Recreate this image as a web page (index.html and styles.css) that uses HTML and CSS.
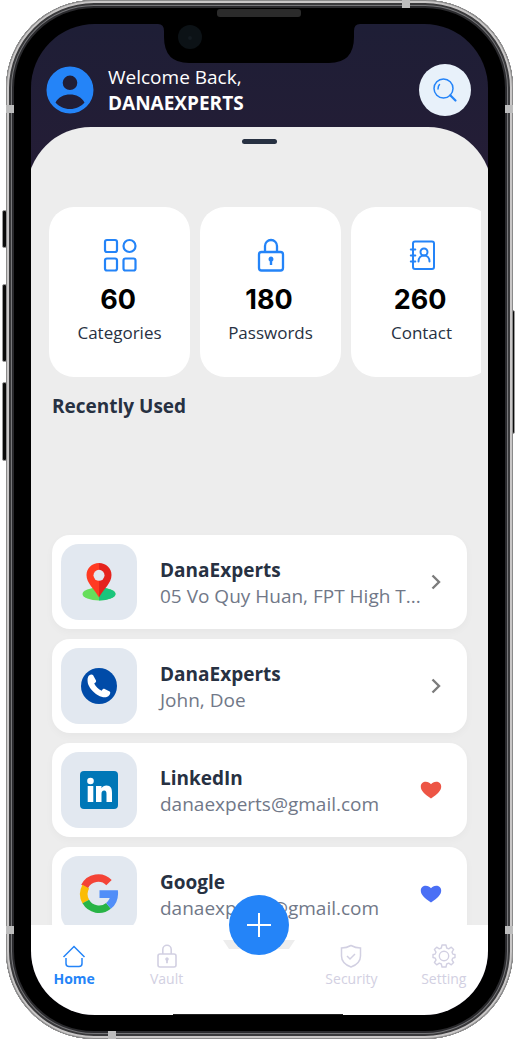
FILE: index.html
```html
<!DOCTYPE html>
<html lang="en">
<head>
<meta charset="utf-8">
<meta name="viewport" content="width=device-width, initial-scale=1">
<title>Password Vault</title>
<link rel="stylesheet" href="styles.css">
</head>
<body>
<div class="phone">
  <span class="side-key key-mute"></span>
  <span class="side-key key-up"></span>
  <span class="side-key key-down"></span>
  <span class="side-key key-power"></span>
  <div class="frame">
    <span class="band band-left-top"></span>
    <span class="band band-left-bottom"></span>
    <span class="band band-right-top"></span>
    <span class="band band-right-bottom"></span>
    <span class="band band-top"></span>
    <span class="band band-bottom"></span>
    <div class="screen">
      <header class="header">
        <svg class="avatar" viewBox="0 0 48 48" aria-hidden="true">
          <path fill="#2484f8" fill-rule="evenodd" d="M24 .5a23.500 23.500 0 1 0 0 47a23.500 23.500 0 0 0 0-47zM24 9.500a7.300 7.300 0 1 1 0 14.600a7.300 7.300 0 0 1 0-14.600zM9.500 36.500C12.500 31 18 28.500 24 28.500s11.500 2.500 14.500 8C35 40.500 30 43 24 43s-11-2.500-14.500-6.500z"/>
        </svg>
        <div class="greeting">
          <p class="welcome">Welcome Back,</p>
          <h1 class="user">DANAEXPERTS</h1>
        </div>
        <button class="search" type="button" aria-label="Search">
          <svg viewBox="0 0 26 26" width="26" height="26" fill="none" stroke="#2484f8" stroke-width="1.500" stroke-linecap="round">
            <circle cx="11.500" cy="11.500" r="9.500"/>
            <path d="M6 12c0-2 .5-3.500 1.500-4.500M18 18l1.500 1.500"/>
            <path stroke-width="2.200" d="M19 19l4.500 4.500"/>
          </svg>
        </button>
      </header>

      <main class="sheet">
        <span class="handle"></span>
        <div class="stats">
          <section class="stat">
            <svg class="stat-icon" viewBox="0 0 36 36" fill="none" stroke="#2484f8" stroke-width="2.200">
              <rect x="3" y="3" width="12" height="12" rx="2"/>
              <circle cx="27.500" cy="9" r="6"/>
              <rect x="3" y="21.500" width="12" height="12" rx="2"/>
              <rect x="21.500" y="21.500" width="12" height="12" rx="2"/>
            </svg>
            <strong class="stat-value">60</strong>
            <span class="stat-label">Categories</span>
          </section>
          <section class="stat">
            <svg class="stat-icon" viewBox="0 0 36 36" fill="none" stroke="#2484f8" stroke-width="2.300">
              <rect x="6" y="15" width="24" height="18.500" rx="2.500"/>
              <path d="M12 15V9a6 6 0 0 1 12 0v6"/>
              <path fill="#2484f8" stroke="none" d="M18 19.500a2.700 2.700 0 0 1 1.200 5V28h-2.400v-3.500a2.700 2.700 0 0 1 1.200-5z"/>
            </svg>
            <strong class="stat-value">180</strong>
            <span class="stat-label">Passwords</span>
          </section>
          <section class="stat">
            <svg class="stat-icon" viewBox="0 0 36 36" fill="none" stroke="#2484f8" stroke-width="2" stroke-linecap="round">
              <rect x="9" y="4.500" width="21" height="27.500" rx="2"/>
              <path d="M6.800 12.500h4.500M6.800 18.500h4.500M6.800 24.500h4.500"/>
              <circle cx="20" cy="15" r="3.500"/>
              <path d="M14.500 24.500c0-3.500 2.200-6 5.500-6s5.500 2.500 5.500 6"/>
            </svg>
            <strong class="stat-value">260</strong>
            <span class="stat-label">Contact</span>
          </section>
        </div>

        <h2 class="section-title">Recently Used</h2>

        <ul class="items">
          <li class="item">
            <span class="thumb">
              <svg viewBox="0 0 40 40" width="40" height="40">
                <ellipse cx="20" cy="32" rx="16.500" ry="6.500" fill="#66de5b"/>
                <path fill="#1bc57d" d="M20 25.500a16.500 6.500 0 0 1 0 13z"/>
                <path fill="#ff3a22" d="M20 1C13 1 7.500 6.200 7.500 13C7.500 21 15 26.500 20 35.500z"/>
                <path fill="#e5231d" d="M20 1C27 1 32.500 6.200 32.500 13C32.500 21 25 26.500 20 35.500z"/>
                <circle cx="20" cy="13.300" r="5.500" fill="#e2e8f0"/>
              </svg>
            </span>
            <div class="item-text">
              <h3 class="item-title">DanaExperts</h3>
              <p class="item-detail">05 Vo Quy Huan, FPT High T...</p>
            </div>
            <button class="item-action" type="button" aria-label="Open">
              <svg viewBox="0 0 24 24" width="24" height="24" fill="none" stroke="#7c7c7c" stroke-width="2.400"><path d="M13.500 5.500l6.500 6.500l-6.500 6.500"/></svg>
            </button>
          </li>
          <li class="item">
            <span class="thumb">
              <svg viewBox="0 0 40 40" width="40" height="40">
                <circle cx="20" cy="20" r="18" fill="#004ba8"/>
                <path fill="#fff" d="M10 9.500C11.500 8.300 13 8 14 9l3 5.500c.4 1-.2 2-1.800 3c1.500 3 4.300 5.800 7.500 7.200c1-1.700 2-2.200 3-1.700l5 2.500c1 .8.700 2.300-.5 3.700c-2.200 2.700-6.200 2.800-11.200 0C13.500 26 10 21.500 8.800 17C8.300 13.500 8.500 11 10 9.500z"/>
              </svg>
            </span>
            <div class="item-text">
              <h3 class="item-title">DanaExperts</h3>
              <p class="item-detail">John, Doe</p>
            </div>
            <button class="item-action" type="button" aria-label="Open">
              <svg viewBox="0 0 24 24" width="24" height="24" fill="none" stroke="#7c7c7c" stroke-width="2.400"><path d="M13.500 5.500l6.500 6.500l-6.500 6.500"/></svg>
            </button>
          </li>
          <li class="item">
            <span class="thumb">
              <svg viewBox="0 0 40 40" width="40" height="40">
                <rect x="1" y="1" width="38" height="38" rx="4" fill="#0077b7"/>
                <g fill="#fff">
                  <circle cx="11.500" cy="11" r="3.300"/>
                  <rect x="8.700" y="16" width="5.600" height="16"/>
                  <path d="M17 16h5.500v2.200c1-1.700 2.800-2.600 5-2.600c4.300 0 5.500 2.900 5.500 7.400v9h-5.500v-8c0-2.200-.5-3.600-2.300-3.600c-2 0-2.700 1.400-2.700 3.600v8H17z"/>
                </g>
              </svg>
            </span>
            <div class="item-text">
              <h3 class="item-title">LinkedIn</h3>
              <p class="item-detail">danaexperts@gmail.com</p>
            </div>
            <button class="item-action" type="button" aria-label="Favourite">
              <svg viewBox="0 0 24 24" width="24" height="24"><path fill="#ed5545" d="M12 20.500C5 16 1.800 12.500 1.800 8.500C1.800 5.500 4 3.700 6.800 3.700c2.200 0 4 .9 5.200 2.600c1.200-1.700 3-2.600 5.200-2.600c2.800 0 5 1.800 5 4.800c0 4-3.200 7.500-10.200 12z"/></svg>
            </button>
          </li>
          <li class="item">
            <span class="thumb">
              <svg viewBox="0 0 40 40" width="40" height="40" fill="none" stroke-width="7.600">
                <path stroke="#f44336" d="M5.600 12.500A15.200 15.200 0 0 1 30 8.600"/>
                <path stroke="#fbbc05" d="M6.800 27.500A15.200 15.200 0 0 1 6.800 12.500"/>
                <path stroke="#28b446" d="M6.800 27.500A15.200 15.200 0 0 0 29.500 31.900"/>
                <path stroke="#518ef8" d="M29.500 31.900A15.200 15.200 0 0 0 35.200 20"/>
                <path fill="#518ef8" stroke="none" d="M20.500 16.200h18.400q.3 2.300 0 4.800l-5.500 3H20.500z"/>
              </svg>
            </span>
            <div class="item-text">
              <h3 class="item-title">Google</h3>
              <p class="item-detail">danaexperts@gmail.com</p>
            </div>
            <button class="item-action" type="button" aria-label="Favourite">
              <svg viewBox="0 0 24 24" width="24" height="24"><path fill="#4a6ff5" d="M12 20.500C5 16 1.800 12.500 1.800 8.500C1.800 5.500 4 3.700 6.800 3.700c2.200 0 4 .9 5.200 2.600c1.200-1.700 3-2.600 5.200-2.600c2.800 0 5 1.800 5 4.800c0 4-3.200 7.500-10.200 12z"/></svg>
            </button>
          </li>
        </ul>
      </main>

      <nav class="tabs">
        <a class="tab active" href="#home">
          <svg viewBox="0 0 24 24" width="24" height="24" fill="none" stroke="currentColor" stroke-width="1.500"><path d="M1.500 13L12 2.500L22.500 13M4 14v5.500a3 3 0 0 0 3 3h10a3 3 0 0 0 3-3V14"/></svg>
          <span>Home</span>
        </a>
        <a class="tab" href="#vault">
          <svg viewBox="0 0 24 24" width="24" height="24" fill="none" stroke="currentColor" stroke-width="1.600"><rect x="3" y="10" width="18" height="13" rx="2"/><path d="M7.800 10V5.500a4.200 4.200 0 0 1 8.400 0V10"/><path fill="currentColor" stroke="none" d="M12 13.200a1.900 1.900 0 0 1 .9 3.500v2.500h-1.800v-2.500a1.900 1.900 0 0 1 .9-3.500z"/></svg>
          <span>Vault</span>
        </a>
        <span class="tab-gap">
          <svg class="cradle" viewBox="0 0 72 9" aria-hidden="true"><path fill="#ededed" d="M0 0h72l-6 9H6z"/></svg>
          <button class="add" type="button" aria-label="Add">
            <svg viewBox="0 0 26 26" width="26" height="26" fill="none" stroke="#fff" stroke-width="2"><path d="M13 1v24M1 13h24"/></svg>
          </button>
        </span>
        <a class="tab" href="#security">
          <svg viewBox="0 0 24 24" width="24" height="24" fill="none" stroke="currentColor" stroke-width="1.500"><path d="M12 1.500C9 3.200 6 4 2.500 4v8c0 5 4 9 9.500 11c5.500-2 9.500-6 9.500-11V4C18 4 15 3.200 12 1.500z"/><path d="M8 12l3 3l5-5"/></svg>
          <span>Security</span>
        </a>
        <a class="tab" href="#setting">
          <svg viewBox="0 0 24 24" width="24" height="24" fill="none" stroke="currentColor" stroke-width="1.400" stroke-linejoin="round"><path d="M10 1h4l.7 3l2 .8l2.600-1.600l2.300 2.300L20 8.100l.8 2L23 10.500v3l-2.200.6l-.8 2l1.600 2.400l-2.300 2.300l-2.600-1.600l-2 .8L14 23h-4l-.7-3l-2-.8l-2.600 1.600l-2.300-2.300L4 16.100l-.8-2L1 13.500v-3l2.200-.4l.8-2L2.400 5.500l2.300-2.300l2.600 1.600l2-.8z"/><circle cx="12" cy="12" r="4.700"/></svg>
          <span>Setting</span>
        </a>
      </nav>
      <span class="home-bar"></span>
    </div>
    <svg class="notch" viewBox="0 0 206 54" aria-hidden="true">
      <path fill="#000" d="M0 0H206V15H204Q198 15 198 22V28Q198 54 173 54H33Q8 54 8 28V22Q8 15 2 15H0z"/>
      <rect x="61" y="0" width="84" height="8" rx="3" fill="#2b2b2b"/>
      <circle cx="34" cy="28" r="12" fill="#0c1216"/>
      <circle cx="34" cy="29" r="2" fill="#141b20"/>
    </svg>
  </div>
</div>
</body>
</html>
```
FILE: styles.css
```css
* {
  box-sizing: border-box;
}

body {
  margin: 0;
  background: #fff;
  color: #273142;
  font-family: "Open Sans", "Noto Sans", sans-serif;
}

h1, h2, h3, p, ul {
  margin: 0;
  padding: 0;
}

button {
  border: 0;
  padding: 0;
  background: none;
  display: grid;
  place-items: center;
}

svg {
  display: block;
}

.phone {
  position: relative;
  height: 100vh;
  padding: 0 2px 0 6px;
}

.side-key {
  position: absolute;
  left: 2px;
  width: 5px;
  border: 1px solid #999;
  border-radius: 2px;
  background: #0a0a0a;
}

.key-mute { top: 210px; height: 38px; }
.key-up { top: 284px; height: 78px; }
.key-down { top: 382px; height: 79px; }
.key-power { left: auto; right: 0; top: 310px; height: 124px; }

.frame {
  position: relative;
  height: 100%;
  padding: 24px 25px;
  background: #000;
  border-radius: 88px;
  box-shadow:
    inset 0 0 0 1px #8a8a8a,
    inset 0 0 0 3px #c9c7c7,
    inset 0 0 0 5px #3a3a3c,
    inset 0 0 0 6px #77777a,
    inset 0 0 0 8px #2a2a2d;
}

.band {
  position: absolute;
  width: 8px;
  height: 8px;
  background: #bdbdbd;
}

.band-left-top { left: 0; top: 105px; }
.band-left-bottom { left: 0; bottom: 105px; }
.band-right-top { right: 0; top: 105px; }
.band-right-bottom { right: 0; bottom: 105px; }
.band-top { right: 103px; top: 0; }
.band-bottom { left: 102px; bottom: 0; }

.screen {
  position: relative;
  display: flex;
  flex-direction: column;
  height: 100%;
  overflow: hidden;
  border-radius: 64px;
  background: linear-gradient(#1e1e36, #251d36 160px);
}

.notch {
  position: absolute;
  top: 9px;
  left: 50%;
  width: 206px;
  height: 54px;
  margin-left: -104px;
}

.header {
  display: flex;
  align-items: center;
  gap: 14px;
  padding: 40px 17px 11px 15px;
}

.avatar {
  width: 48px;
  height: 48px;
}

.greeting {
  flex: 1;
  color: #fff;
  font-size: 19px;
  line-height: 26px;
}

.welcome {
  font-weight: 400;
}

.user {
  font-size: inherit;
  font-weight: 700;
}

.search {
  width: 52px;
  height: 52px;
  border-radius: 50%;
  background: #e8f1fa;
}

.sheet {
  flex: 1;
  min-height: 0;
  overflow: hidden;
  margin: 0 -4px;
  padding: 12px 25px 0;
  border-radius: 64px 64px 0 0;
  background: #ededed;
}

.handle {
  display: block;
  width: 35px;
  height: 5px;
  margin: 0 auto 63px;
  border-radius: 3px;
  background: #273142;
}

.stats {
  display: flex;
  gap: 10px;
  margin: 0 -14px 0 -3px;
  overflow: hidden;
}

.stat {
  flex: 0 0 141px;
  display: flex;
  flex-direction: column;
  align-items: center;
  height: 170px;
  padding-top: 30px;
  border-radius: 25px;
  background: #fff;
}

.stat-icon {
  width: 36px;
  height: 36px;
}

.stat-value {
  margin-top: 10px;
  padding-right: 3px;
  color: #000;
  font: 700 27px/34px Inter, sans-serif;
}

.stat-label {
  margin-top: 4px;
  font-size: 17px;
  line-height: 24px;
}

.section-title {
  margin: 16px 0 116px;
  font-size: 19px;
  line-height: 26px;
}

.items {
  display: flex;
  flex-direction: column;
  gap: 10px;
  list-style: none;
}

.item {
  display: flex;
  align-items: center;
  height: 94px;
  padding: 0 24px 0 9px;
  border-radius: 18px;
  background: #fff;
  box-shadow: 0 3px 8px rgba(0, 0, 0, 0.03);
}

.thumb {
  display: grid;
  place-items: center;
  flex: none;
  width: 76px;
  height: 76px;
  border-radius: 18px;
  background: #e2e8f0;
}

.item-text {
  flex: 1;
  min-width: 0;
  padding: 2px 0 0 23px;
}

.item-title,
.item-detail {
  font-size: 19px;
  line-height: 26px;
}

.item-detail {
  color: #717888;
  white-space: nowrap;
}

.tabs {
  position: relative;
  display: grid;
  grid-template-columns: repeat(5, 1fr);
  margin: 0 -2px 0 -3px;
  padding: 19px 0 26px;
  background: #fff;
}

.tab {
  display: flex;
  flex-direction: column;
  align-items: center;
  gap: 1px;
  color: #d2d0e2;
  font-size: 14px;
  line-height: 20px;
  text-decoration: none;
}

.tab.active {
  color: #2484f8;
  font-weight: 700;
}

.cradle {
  position: absolute;
  top: 15px;
  left: 50%;
  width: 72px;
  height: 9px;
  margin-left: -36px;
}

.add {
  position: absolute;
  top: -30px;
  left: 50%;
  width: 60px;
  height: 60px;
  margin-left: -30px;
  border-radius: 50%;
  background: #2484f8;
}

.home-bar {
  position: absolute;
  bottom: 0;
  left: 50%;
  width: 170px;
  height: 1px;
  margin-left: -87px;
  background: #222;
}
```
